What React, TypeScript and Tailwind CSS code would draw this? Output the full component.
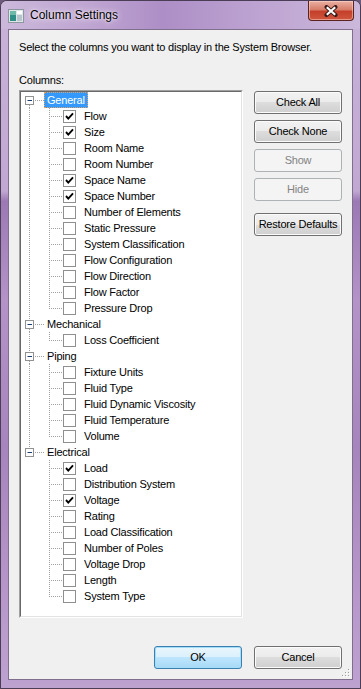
import React from "react";

type Item = [string, boolean];

const GROUPS: { name: string; items: Item[] }[] = [
  {
    name: "General",
    items: [
      ["Flow", true],
      ["Size", true],
      ["Room Name", false],
      ["Room Number", false],
      ["Space Name", true],
      ["Space Number", true],
      ["Number of Elements", false],
      ["Static Pressure", false],
      ["System Classification", false],
      ["Flow Configuration", false],
      ["Flow Direction", false],
      ["Flow Factor", false],
      ["Pressure Drop", false],
    ],
  },
  { name: "Mechanical", items: [["Loss Coefficient", false]] },
  {
    name: "Piping",
    items: [
      ["Fixture Units", false],
      ["Fluid Type", false],
      ["Fluid Dynamic Viscosity", false],
      ["Fluid Temperature", false],
      ["Volume", false],
    ],
  },
  {
    name: "Electrical",
    items: [
      ["Load", true],
      ["Distribution System", false],
      ["Voltage", true],
      ["Rating", false],
      ["Load Classification", false],
      ["Number of Poles", false],
      ["Voltage Drop", false],
      ["Length", false],
      ["System Type", false],
    ],
  },
];

const LINE = "#a0a0a0";

function GroupConnector({ first, last }: { first: boolean; last: boolean }) {
  return (
    <svg width="23" height="16" className="shrink-0">
      {!first && <line x1="8.5" y1="0" x2="8.5" y2="4" stroke={LINE} strokeDasharray="1 1" />}
      {!last && <line x1="8.5" y1="13" x2="8.5" y2="16" stroke={LINE} strokeDasharray="1 1" />}
      <rect x="4.5" y="4.5" width="8" height="8" fill="#fff" stroke="#919191" />
      <line x1="6.5" y1="8.5" x2="11" y2="8.5" stroke="#1c3d75" />
      <line x1="14" y1="8.5" x2="23" y2="8.5" stroke={LINE} strokeDasharray="1 1" />
    </svg>
  );
}

function ItemConnector({ groupLast, itemLast }: { groupLast: boolean; itemLast: boolean }) {
  return (
    <svg width="41" height="16" className="shrink-0">
      {!groupLast && <line x1="8.5" y1="0" x2="8.5" y2="16" stroke={LINE} strokeDasharray="1 1" />}
      <line x1="28.5" y1="0" x2="28.5" y2={itemLast ? 9 : 16} stroke={LINE} strokeDasharray="1 1" />
      <line x1="30" y1="8.5" x2="41" y2="8.5" stroke={LINE} strokeDasharray="1 1" />
    </svg>
  );
}

function CheckBox({ checked }: { checked: boolean }) {
  return (
    <svg width="13" height="13" className="shrink-0">
      <rect x="0.5" y="0.5" width="12" height="12" fill="#fff" stroke="#8e8f8f" />
      {checked && (
        <polyline points="3,6 5.3,8.6 10,3.4" fill="none" stroke="#000" strokeWidth="1.9" />
      )}
    </svg>
  );
}

function Btn({ label, disabled, primary }: { label: string; disabled?: boolean; primary?: boolean }) {
  const look = disabled
    ? "border-[#adb2b5] bg-[#f4f4f4] text-[#838383]"
    : primary
    ? "border-[#3c7fb1] bg-[linear-gradient(to_bottom,#eaf6fd_0%,#d9f0fc_50%,#bee6fd_50%,#a7d9f5_100%)] shadow-[inset_0_0_0_1px_#a3def8] text-black"
    : "border-[#707070] bg-[linear-gradient(to_bottom,#f2f2f2_0%,#ebebeb_50%,#dddddd_50%,#cfcfcf_100%)] shadow-[inset_0_0_0_1px_#fbfbfb] text-black";
  return (
    <div className={`h-[23px] w-[88px] rounded-[3px] border flex items-center justify-center text-[11px] ${look}`}>
      {label}
    </div>
  );
}

function AppIcon() {
  return (
    <svg width="16" height="14" className="shrink-0">
      <rect x="0.5" y="0.5" width="15" height="13" fill="#dfe6ea" stroke="#8d969c" />
      <rect x="2" y="2" width="6" height="10" fill="#2f8f86" />
      <rect x="2" y="2" width="6" height="4" fill="#6fb9a8" />
      <rect x="9" y="2" width="5" height="3" fill="#ffffff" />
      <rect x="9" y="6" width="5" height="6" fill="#b8c4cb" />
    </svg>
  );
}

function CloseButton() {
  return (
    <div className="w-[46px] h-[20px] rounded-b-[4px] border border-t-0 border-[#5b2320] bg-[linear-gradient(to_bottom,#eab1a4_0%,#d77d69_45%,#c4402a_55%,#d0563f_100%)] shadow-[inset_0_0_0_1px_rgba(255,220,210,0.5)] flex items-center justify-center">
      <svg width="14" height="12">
        <path
          d="M2.5 2 L11.5 10 M11.5 2 L2.5 10"
          fill="none"
          stroke="#3a1a18"
          strokeWidth="4"
          strokeLinecap="round"
        />
        <path d="M2.8 2.2 L11.2 9.8 M11.2 2.2 L2.8 9.8" fill="none" stroke="#fff" strokeWidth="2.2" />
      </svg>
    </div>
  );
}

function SizeGrip() {
  return (
    <svg width="12" height="12" className="absolute right-[1px] bottom-[1px]">
      {[
        [9, 3],
        [9, 6],
        [6, 6],
        [9, 9],
        [6, 9],
        [3, 9],
      ].map(([x, y], i) => (
        <g key={i}>
          <rect x={x + 1} y={y + 1} width="1" height="1" fill="#fff" />
          <rect x={x} y={y} width="1" height="1" fill="#a0a0a0" />
        </g>
      ))}
    </svg>
  );
}

export default function App() {
  return (
    <div className="w-[361px] h-[689px] bg-[#6d5a7c] font-['Liberation_Sans',Arial,sans-serif] text-black overflow-hidden">
      <div className="w-full h-full rounded-t-[7px] border border-[#4a3d55] bg-[linear-gradient(to_bottom,#c8b3d8_0px,#c1a8d3_190px,#9c79b4_200px,#b393c8_300px,#a684bd_450px,#b898cb_600px,#bda2d0_689px)] flex flex-col">
        <div className="h-[28px] shrink-0 flex items-start relative rounded-t-[6px] bg-[linear-gradient(to_right,#cbb8da_0%,#bfa5d2_25%,#ad8ec6_45%,#bca2d1_70%,#cbb8da_100%)]">
          <div className="flex items-center pl-[7px] pt-[7px] gap-[6px]">
            <AppIcon />
            <span className="text-[12px] leading-[15px] text-black [text-shadow:0_0_6px_rgba(255,255,255,0.95),0_0_2px_rgba(255,255,255,0.8)]">
              Column Settings
            </span>
          </div>
          <div className="ml-auto mr-[6px]">
            <CloseButton />
          </div>
        </div>
        <div className="flex-1 mx-[7px] mb-[8px] border border-[#7f6f8c] bg-[#f0f0f0] relative flex flex-col px-[10px] pt-[11px] pb-[10px] text-[11px] leading-[13px] tracking-[-0.2px]">
          <div>Select the columns you want to display in the System Browser.</div>
          <div className="mt-[20px]">Columns:</div>
          <div className="mt-[3px] flex gap-[11px]">
            <div className="w-[224px] h-[528px] border border-t-[#a0a0a0] border-l-[#a0a0a0] border-b-white border-r-white">
              <div className="w-full h-full border border-t-[#696969] border-l-[#696969] border-b-[#e3e3e3] border-r-[#e3e3e3] bg-white">
                {GROUPS.map((g, gi) => {
                  const groupLast = gi === GROUPS.length - 1;
                  return (
                    <div key={g.name}>
                      <div className="h-[16px] flex items-center">
                        <GroupConnector first={gi === 0} last={groupLast} />
                        <span
                          className={`h-[16px] px-[2px] border flex items-center whitespace-nowrap ${
                            gi === 0
                              ? "bg-[#3399ff] text-white border-dotted border-[#e0a060]"
                              : "border-transparent"
                          }`}
                        >
                          {g.name}
                        </span>
                      </div>
                      {g.items.map(([label, checked], ii) => (
                        <div key={label} className="h-[16px] flex items-center">
                          <ItemConnector groupLast={groupLast} itemLast={ii === g.items.length - 1} />
                          <span className="ml-[1px] flex items-center">
                            <CheckBox checked={checked} />
                          </span>
                          <span className="ml-[8px] whitespace-nowrap">{label}</span>
                        </div>
                      ))}
                    </div>
                  );
                })}
              </div>
            </div>
            <div className="pt-[1px] flex flex-col gap-[6px]">
              <Btn label="Check All" />
              <Btn label="Check None" />
              <Btn label="Show" disabled />
              <Btn label="Hide" disabled />
              <div className="mt-[6px]">
                <Btn label="Restore Defaults" />
              </div>
            </div>
          </div>
          <div className="mt-auto flex justify-end gap-[12px]">
            <Btn label="OK" primary />
            <Btn label="Cancel" />
          </div>
          <SizeGrip />
        </div>
      </div>
    </div>
  );
}
